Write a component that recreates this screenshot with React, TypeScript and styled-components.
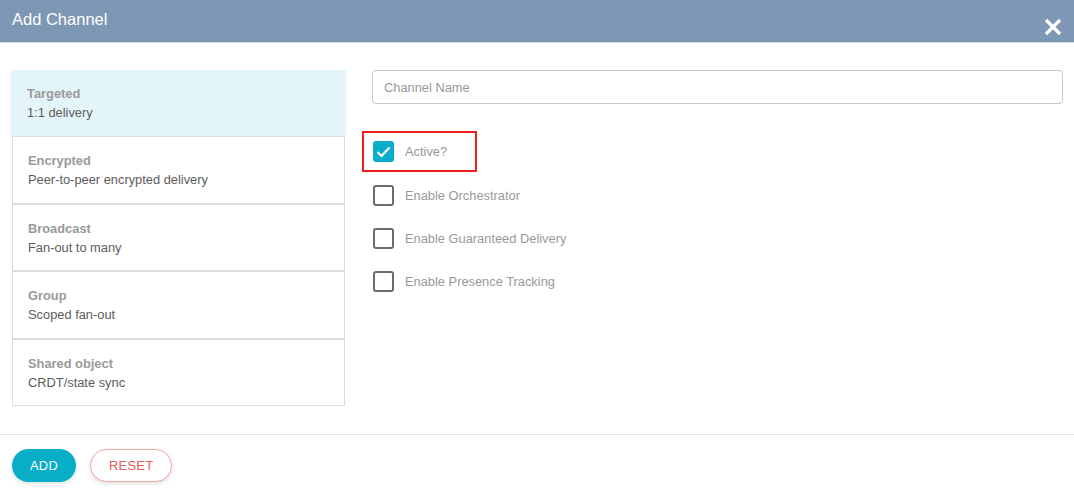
import React, { useState } from "react";
import styled, { createGlobalStyle } from "styled-components";

const FONT = `"Liberation Sans", Arial, Helvetica, sans-serif`;

const Global = createGlobalStyle`
  html, body { margin: 0; padding: 0; background: #fff; }
  body { font-family: ${FONT}; }
  * { box-sizing: border-box; }
`;

const Modal = styled.div`
  width: 1074px;
  height: 494px;
  display: flex;
  flex-direction: column;
  background: #fff;
`;

const Header = styled.div`
  height: 43px;
  background: #7d97b5;
  border-bottom: 1px solid #d9dde3;
  display: flex;
  align-items: flex-start;
  justify-content: space-between;
  padding: 0 12px;
  color: #fff;
`;

const Title = styled.h1`
  margin: 0;
  font-family: ${FONT};
  font-weight: 400;
  font-size: 16.5px;
  line-height: 39px;
  color: #fff;
`;

const Close = styled.button`
  border: 0;
  background: transparent;
  padding: 0;
  margin-top: 17px;
  margin-right: -1px;
  width: 20px;
  height: 20px;
  display: flex;
  align-items: center;
  justify-content: center;
  cursor: pointer;
`;

const Body = styled.div`
  flex: 0 0 392px;
  display: grid;
  grid-template-columns: 333px 1fr;
  column-gap: 27px;
  padding: 27px 11px 0 12px;
  border-bottom: 1px solid #e2e2e2;
`;

const List = styled.div`
  display: flex;
  flex-direction: column;
`;

const Item = styled.div<{ $selected?: boolean }>`
  height: ${(p) => (p.$selected ? "66px" : "67.5px")};
  padding: 15px 15px 0;
  border: 1px solid ${(p) => (p.$selected ? "transparent" : "#dcdcdc")};
  border-top-width: ${(p) => (p.$selected ? "0" : "1px")};
  background: ${(p) => (p.$selected ? "#e3f5f8" : "#fff")};
  margin: ${(p) => (p.$selected ? "0 -1px" : "0")};
  box-shadow: ${(p) => (p.$selected ? "0 1px 3px rgba(0,0,0,0.08)" : "none")};
  border-radius: ${(p) => (p.$selected ? "2px" : "0")};
  cursor: pointer;
`;

const ItemTitle = styled.div`
  font-size: 12.85px;
  font-weight: 700;
  color: #9a9a9a;
  line-height: 18px;
`;

const ItemDesc = styled.div`
  font-size: 12.85px;
  color: #5c5c5c;
  line-height: 19px;
`;

const Right = styled.div`
  display: flex;
  flex-direction: column;
`;

const Input = styled.input`
  height: 34px;
  width: 100%;
  border: 1px solid #c8c8c8;
  border-radius: 4px;
  padding: 0 11px;
  font-family: ${FONT};
  font-size: 12.85px;
  color: #555;
  outline: none;
  &::placeholder { color: #999; }
`;

const Checks = styled.div`
  display: flex;
  flex-direction: column;
  margin-top: 27px;
  margin-left: -10px;
`;

const CheckRow = styled.label<{ $focused?: boolean }>`
  display: flex;
  align-items: center;
  height: ${(p) => (p.$focused ? "41px" : "43px")};
  width: ${(p) => (p.$focused ? "115px" : "auto")};
  padding-left: ${(p) => (p.$focused ? "9px" : "11px")};
  border: ${(p) => (p.$focused ? "2px solid #f01f1f" : "0")};
  margin-bottom: ${(p) => (p.$focused ? "2px" : "0")};
  cursor: pointer;
`;

const Box = styled.span<{ $checked?: boolean }>`
  width: 21px;
  height: 21px;
  border-radius: 3px;
  border: ${(p) => (p.$checked ? "0" : "2px solid #6b6b6b")};
  background: ${(p) => (p.$checked ? "#0aaec8" : "#fff")};
  display: flex;
  align-items: center;
  justify-content: center;
  flex: none;
`;

const Label = styled.span`
  margin-left: 11px;
  font-size: 12.85px;
  color: #999;
`;

const Footer = styled.div`
  display: flex;
  align-items: flex-start;
  gap: 14px;
  padding: 14px 12px 0;
`;

const Button = styled.button<{ $variant: "primary" | "outline" }>`
  height: 33px;
  padding: 0 18px;
  border-radius: 17px;
  font-family: ${FONT};
  font-size: 12.85px;
  letter-spacing: 0.3px;
  cursor: pointer;
  background: ${(p) => (p.$variant === "primary" ? "#08aec8" : "#fff")};
  color: ${(p) => (p.$variant === "primary" ? "#fff" : "#e45a5a")};
  border: ${(p) => (p.$variant === "primary" ? "0" : "1px solid #f2a5a5")};
  box-shadow: 0 2px 4px rgba(0, 0, 0, 0.12);
  min-width: ${(p) => (p.$variant === "primary" ? "64px" : "81px")};
`;

const channels = [
  { title: "Targeted", desc: "1:1 delivery" },
  { title: "Encrypted", desc: "Peer-to-peer encrypted delivery" },
  { title: "Broadcast", desc: "Fan-out to many" },
  { title: "Group", desc: "Scoped fan-out" },
  { title: "Shared object", desc: "CRDT/state sync" },
];

const options = [
  "Active?",
  "Enable Orchestrator",
  "Enable Guaranteed Delivery",
  "Enable Presence Tracking",
];

export default function App() {
  const [selected, setSelected] = useState(0);
  const [checked, setChecked] = useState<boolean[]>([true, false, false, false]);
  return (
    <Modal>
      <Global />
      <Header>
        <Title>Add Channel</Title>
        <Close aria-label="close">
          <svg width="18" height="18" viewBox="0 0 18 18">
            <path d="M2 2 L16 16 M16 2 L2 16" stroke="#fff" strokeWidth="3.2" strokeLinecap="butt" />
          </svg>
        </Close>
      </Header>
      <Body>
        <List>
          {channels.map((c, i) => (
            <Item key={c.title} $selected={i === selected} onClick={() => setSelected(i)}>
              <ItemTitle>{c.title}</ItemTitle>
              <ItemDesc>{c.desc}</ItemDesc>
            </Item>
          ))}
        </List>
        <Right>
          <Input placeholder="Channel Name" />
          <Checks>
            {options.map((o, i) => (
              <CheckRow
                key={o}
                $focused={i === 0}
                onClick={() => setChecked(checked.map((v, j) => (j === i ? !v : v)))}
              >
                <Box $checked={checked[i]}>
                  {checked[i] && (
                    <svg width="15" height="12" viewBox="0 0 15 12">
                      <path d="M1.5 6 L5.5 10 L13.5 1.5" stroke="#fff" strokeWidth="2.2" fill="none" />
                    </svg>
                  )}
                </Box>
                <Label>{o}</Label>
              </CheckRow>
            ))}
          </Checks>
        </Right>
      </Body>
      <Footer>
        <Button $variant="primary">ADD</Button>
        <Button $variant="outline">RESET</Button>
      </Footer>
    </Modal>
  );
}
